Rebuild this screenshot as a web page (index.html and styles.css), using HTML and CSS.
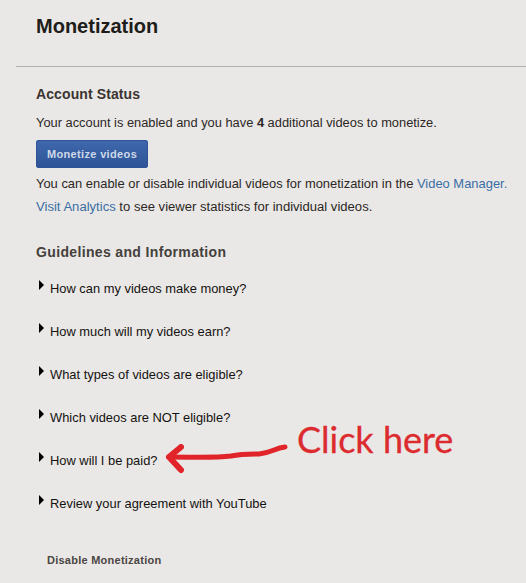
FILE: index.html
```html
<!DOCTYPE html>
<html lang="en">
<head>
<meta charset="utf-8">
<title>Monetization</title>
<link rel="stylesheet" href="styles.css">
</head>
<body>
<header class="page-header"><h1>Monetization</h1></header>
<main class="content">
  <section class="status">
    <h2>Account Status</h2>
    <p class="first">Your account is enabled and you have <b>4</b> additional videos to monetize.</p>
    <button class="primary" type="button">Monetize videos</button>
    <p class="manager">You can enable or disable individual videos for monetization in the <a href="#">Video Manager.</a></p>
    <p class="analytics"><a href="#">Visit Analytics</a> to see viewer statistics for individual videos.</p>
  </section>
  <section class="guide">
    <h2>Guidelines and Information</h2>
    <ul class="faq">
      <li>How can my videos make money?</li>
      <li>How much will my videos earn?</li>
      <li>What types of videos are eligible?</li>
      <li>Which videos are NOT eligible?</li>
      <li>How will I be paid?</li>
      <li>Review your agreement with YouTube</li>
    </ul>
  </section>
  <button class="link-btn" type="button">Disable Monetization</button>
</main>
<div class="note">
  <svg class="arrow" width="130" height="40" viewBox="0 0 130 40" aria-hidden="true">
    <path d="M120 3 C110 4 106 9 94 10 C84 10 76 10 66 12 C50 14 30 13 4 13" fill="none" stroke="#e0242a" stroke-width="5" stroke-linecap="round" stroke-linejoin="round"/>
    <path d="M16 3 L4 13 L16 26" fill="none" stroke="#e0242a" stroke-width="6" stroke-linecap="round" stroke-linejoin="round"/>
  </svg>
  <span class="click">Click here</span>
</div>
</body>
</html>
```
FILE: styles.css
```css
* { box-sizing: border-box; }
html, body { margin: 0; padding: 0; }
body {
  position: relative;
  width: 526px;
  height: 583px;
  overflow: hidden;
  background: #eae8e6;
  color: #2b2725;
  font-family: "Liberation Sans", Arial, sans-serif;
}
.page-header {
  height: 67px;
  margin-left: 16px;
  padding: 14px 0 0 20px;
  border-bottom: 1px solid #b4b1ae;
}
h1 {
  margin: 0;
  font-size: 20px;
  line-height: 24px;
  font-weight: bold;
  color: #201c1a;
}
.content { padding: 19px 0 0 36px; }
h2 {
  margin: 0;
  font-size: 14px;
  line-height: 16px;
  font-weight: bold;
  letter-spacing: 0.1px;
  color: #3a3431;
}
p {
  margin: 0;
  font-size: 12.85px;
  line-height: 16px;
  white-space: nowrap;
}
.first { margin-top: 13px; }
.manager { margin-top: 8px; font-size: 12.93px; }
.analytics { margin-top: 7px; font-size: 13.08px; }
a { color: #3a6ea5; text-decoration: none; }
.primary {
  display: block;
  width: 112px;
  height: 28px;
  margin-top: 9px;
  padding: 0;
  border: 1px solid #2f5596;
  border-radius: 2px;
  background: linear-gradient(#3f68ad, #2d5496);
  color: #cfd9e8;
  font: bold 11px "Liberation Sans", Arial, sans-serif;
  letter-spacing: 0.35px;
}
.guide { margin-top: 29px; }
.guide h2 { color: #44403c; letter-spacing: 0.35px; }
.faq { list-style: none; margin: 0; padding: 21px 0 0; }
.faq li {
  position: relative;
  height: 43px;
  padding-left: 14px;
  font-size: 12.9px;
  line-height: 16px;
  color: #141210;
}
.faq li::before {
  content: "";
  position: absolute;
  left: 3px;
  top: -1px;
  border-left: 5px solid #000;
  border-top: 5px solid transparent;
  border-bottom: 5px solid transparent;
}
.link-btn {
  display: block;
  margin: 14px 0 0 11px;
  padding: 0;
  border: 0;
  background: none;
  color: #4a4643;
  font: bold 11px/14px "Liberation Sans", Arial, sans-serif;
  letter-spacing: 0.25px;
}
.note { position: absolute; left: 0; top: 0; }
.arrow { position: absolute; left: 165px; top: 444px; }
.click {
  position: absolute;
  left: 297px;
  top: 417px;
  font-family: Lato, "Open Sans", sans-serif;
  font-size: 36px;
  line-height: 44px;
  color: #dc2b2e;
  white-space: nowrap;
  -webkit-text-stroke: 0.3px #dc2b2e;
}
```
